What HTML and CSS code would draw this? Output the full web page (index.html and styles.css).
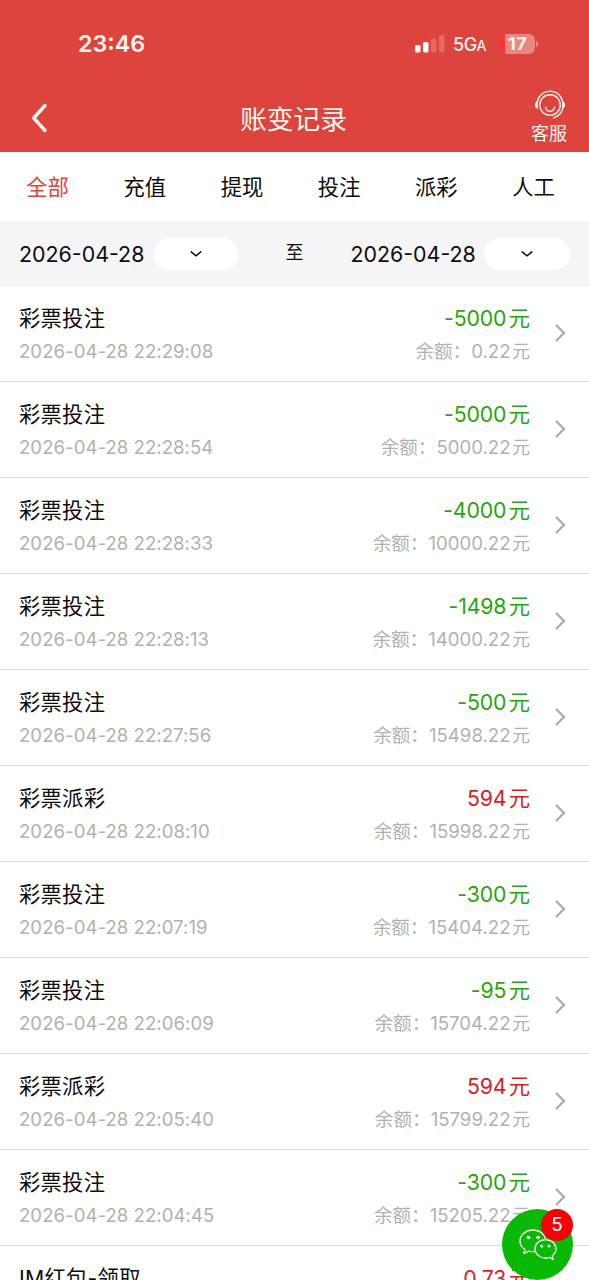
FILE: index.html
```html
<!DOCTYPE html>
<html lang="zh-CN">
<head>
<meta charset="utf-8">
<title>账变记录</title>
<link rel="stylesheet" href="styles.css">
</head>
<body>
<div class="screen">
  <header class="header">
    <div class="status">
      <span class="time">23:46</span>
      <svg class="signal" width="30" height="20" viewBox="0 0 30 20" fill="#fff"><rect x="0" y="11" width="5.5" height="7.5" rx="1.6"/><rect x="8" y="8" width="5.5" height="10.5" rx="1.6"/><g opacity=".2"><rect x="16" y="4.500" width="5.500" height="14" rx="1.6"/><rect x="24" y="1" width="5.500" height="17.500" rx="1.6"/></g></svg>
      <span class="network">5G<small>A</small></span>
      <span class="battery"><b>17</b></span>
    </div>
    <nav class="navbar">
      <svg class="back" width="18" height="32" viewBox="0 0 18 32" fill="none" stroke="#fff5ee" stroke-width="3.4" stroke-linecap="round" stroke-linejoin="round"><path d="M14 4.500 2.800 17 14 29.500"/></svg>
      <h1>账变记录</h1>
      <div class="service">
        <svg width="32" height="30" viewBox="0 0 32 30" fill="none" stroke="#fff0e8" stroke-width="1.4" stroke-linecap="round"><circle cx="16" cy="15" r="10.300"/><path d="M3.300 11.500C5 5 10 1.200 16 1.200S27 5 28.700 11.500M28.700 18.500C27.500 23 25 26.300 19.500 27.800"/><path d="M3.300 12c-2.400 1-2.400 5.200 0 6zM28.700 12c2.400 1 2.400 5.200 0 6z" fill="#fff0e8"/><path d="M11.500 17.200c1 5.500 8 5.500 9 0"/></svg>
        <span>客服</span>
      </div>
    </nav>
  </header>
  <div class="tabs"><span class="active">全部</span><span>充值</span><span>提现</span><span>投注</span><span>派彩</span><span>人工</span></div>
  <div class="dates">
    <span class="date">2026-04-28</span><span class="pill"><svg width="12" height="8" viewBox="0 0 12 8"><path d="M1.200 1.800 6 5.800l4.800-4"/></svg></span>
    <span class="to">至</span>
    <span class="date">2026-04-28</span><span class="pill"><svg width="12" height="8" viewBox="0 0 12 8"><path d="M1.200 1.800 6 5.800l4.800-4"/></svg></span>
  </div>
  <main class="list" id="list"></main>
  <div class="chat">
    <svg width="38" height="32" viewBox="0 0 38 32" fill="none" stroke="#fff" stroke-width="1.300" stroke-linejoin="round"><path d="M26.800 10.600C25.800 5 21 1 14 1 7 1 1 5.800 1 12c0 3.600 2 6.600 5 8.600L4.800 24.500l5-2.400c1.800.5 3.900.7 6.400.4"/><path d="M26.500 10.600C20.500 10.600 16 14.800 16 19.800S20.500 29 26.500 29c1.400 0 2.700-.2 4-.6l3.600 2-.8-3.700c2.200-1.700 3.700-4.200 3.700-6.900 0-5-4.600-9.200-10.500-9.200Z"/><g fill="#fff" stroke="none"><circle cx="9.500" cy="8.500" r="1.800"/><circle cx="19" cy="8.500" r="1.800"/><circle cx="22.800" cy="17" r="1.500"/><circle cx="30" cy="17" r="1.500"/></g></svg>
    <span class="badge">5</span>
  </div>
</div>
<script src="app.js"></script>
</body>
</html>
```
FILE: styles.css
```css
* { box-sizing: border-box; }
body { margin: 0; background: #fff; color: #0d0d0d; font-family: Inter, "Noto Sans CJK SC", sans-serif; }
.screen { position: relative; width: 589px; height: 1280px; overflow: hidden; display: flex; flex-direction: column; }
.header { height: 152px; flex: none; background: #dc443d; color: #fff5ee; }
.status { height: 84px; display: flex; align-items: center; padding: 3px 51px 0 78px; }
.time { font-size: 23.300px; font-weight: 600; flex: 1; font-feature-settings: "case"; }
.signal { margin-right: 8px; }
.network { width: 34px; margin-right: 13px; font-size: 18px; font-weight: 500; letter-spacing: -.5px; white-space: nowrap; padding-top: 1px; }
.network small { font-size: 14px; }
.battery { position: relative; width: 35px; height: 20px; border-radius: 6px; background: linear-gradient(90deg, #ff3338 0 5px, #e88783 5px); text-align: center; font-size: 18px; line-height: 20px; margin-right: 3px; }
.battery b { font-weight: 700; letter-spacing: .3px; }
.battery::after { content: ""; position: absolute; left: 36px; top: 7px; width: 2px; height: 6px; border-radius: 0 3px 3px 0; background: #e88783; }
.navbar { height: 68px; display: grid; grid-template-columns: 100px 1fr 100px; }
.back { margin: 17px 0 0 31px; }
.navbar h1 { margin: 0 2px 0 0; text-align: center; font-size: 26.700px; line-height: 70px; font-weight: 400; }
.service { width: 40px; margin: 6px 0 0 41px; display: flex; flex-direction: column; align-items: center; font-size: 18px; line-height: 26px; }
.service span { margin: 1px 2px 0 0; white-space: nowrap; }
.service svg { flex: none; }
.tabs { height: 69px; flex: none; display: grid; grid-template-columns: repeat(6, 97.200px); font-size: 21.300px; line-height: 71px; text-align: center; margin-left: -1px; }
.active { color: #dc443d; }
.dates { height: 65.500px; flex: none; background: #f5f5f8; display: flex; align-items: center; padding: 0 19px; }
.date { width: 134px; font-size: 21.400px; white-space: nowrap; }
.pill { width: 86px; height: 32px; border-radius: 16px; background: #fff; display: flex; align-items: center; justify-content: center; }
.pill svg { fill: none; stroke: #111; stroke-width: 1.500; stroke-linecap: round; stroke-linejoin: round; }
.to { width: 112px; text-align: center; font-size: 18px; line-height: 26px; padding-bottom: 2px; }
.list { margin-top: -1px; }
.row { height: 96.050px; border-bottom: 1px solid #dedede; display: flex; padding: 16px 19px 0 19px; }
.left { flex: 1; }
.right { text-align: right; }
.title, .amount { font-size: 21.300px; line-height: 32px; height: 33px; }
.title { letter-spacing: .25px; }
.amount { letter-spacing: -.15px; }
.stamp, .balance { font-size: 18.600px; line-height: 32px; height: 32px; color: #b1b1b1; }
.stamp { letter-spacing: .03px; }
.amount { color: #28a50c; }
.amount.win { color: #dc201f; }
.unit { margin-left: 2.500px; }
.balance .unit { margin-left: 1.500px; font-size: 18px; }
.arrow { margin: 21px 0 0 24px; fill: none; stroke: #aaa; stroke-width: 2.200; }
.chat { position: absolute; left: 502px; top: 1209px; width: 71px; height: 71px; border-radius: 50%; background: #08b906; }
.chat svg { position: absolute; left: 17px; top: 20px; }
.badge { position: absolute; left: 39px; top: 0; width: 32px; height: 32px; border-radius: 50%; background: #f80008; color: #fff; text-align: center; font-size: 19px; line-height: 32px; }
```
FILE: app.js
```js
const records = [
  ["彩票投注", "22:29:08", "-5000", "0.22"],
  ["彩票投注", "22:28:54", "-5000", "5000.22"],
  ["彩票投注", "22:28:33", "-4000", "10000.22"],
  ["彩票投注", "22:28:13", "-1498", "14000.22"],
  ["彩票投注", "22:27:56", "-500", "15498.22"],
  ["彩票派彩", "22:08:10", "594", "15998.22"],
  ["彩票投注", "22:07:19", "-300", "15404.22"],
  ["彩票投注", "22:06:09", "-95", "15704.22"],
  ["彩票派彩", "22:05:40", "594", "15799.22"],
  ["彩票投注", "22:04:45", "-300", "15205.22"],
  ["IM红包-领取", "", "0.73", ""]
];
document.getElementById("list").innerHTML = records.map(([title, time, amount, balance]) => `
  <div class="row">
    <div class="left"><div class="title">${title}</div>${time && `<div class="stamp">2026-04-28 ${time}</div>`}</div>
    <div class="right">
      <div class="amount ${amount[0] === "-" ? "" : "win"}">${amount}<span class="unit">元</span></div>
      ${balance && `<div class="balance">余额：<span class="num">${balance}</span><span class="unit">元</span></div>`}
    </div>
    <svg class="arrow" width="16" height="20" viewBox="0 0 16 20"><path d="m2 2 8 8-8 8"/></svg>
  </div>`).join("");
```
